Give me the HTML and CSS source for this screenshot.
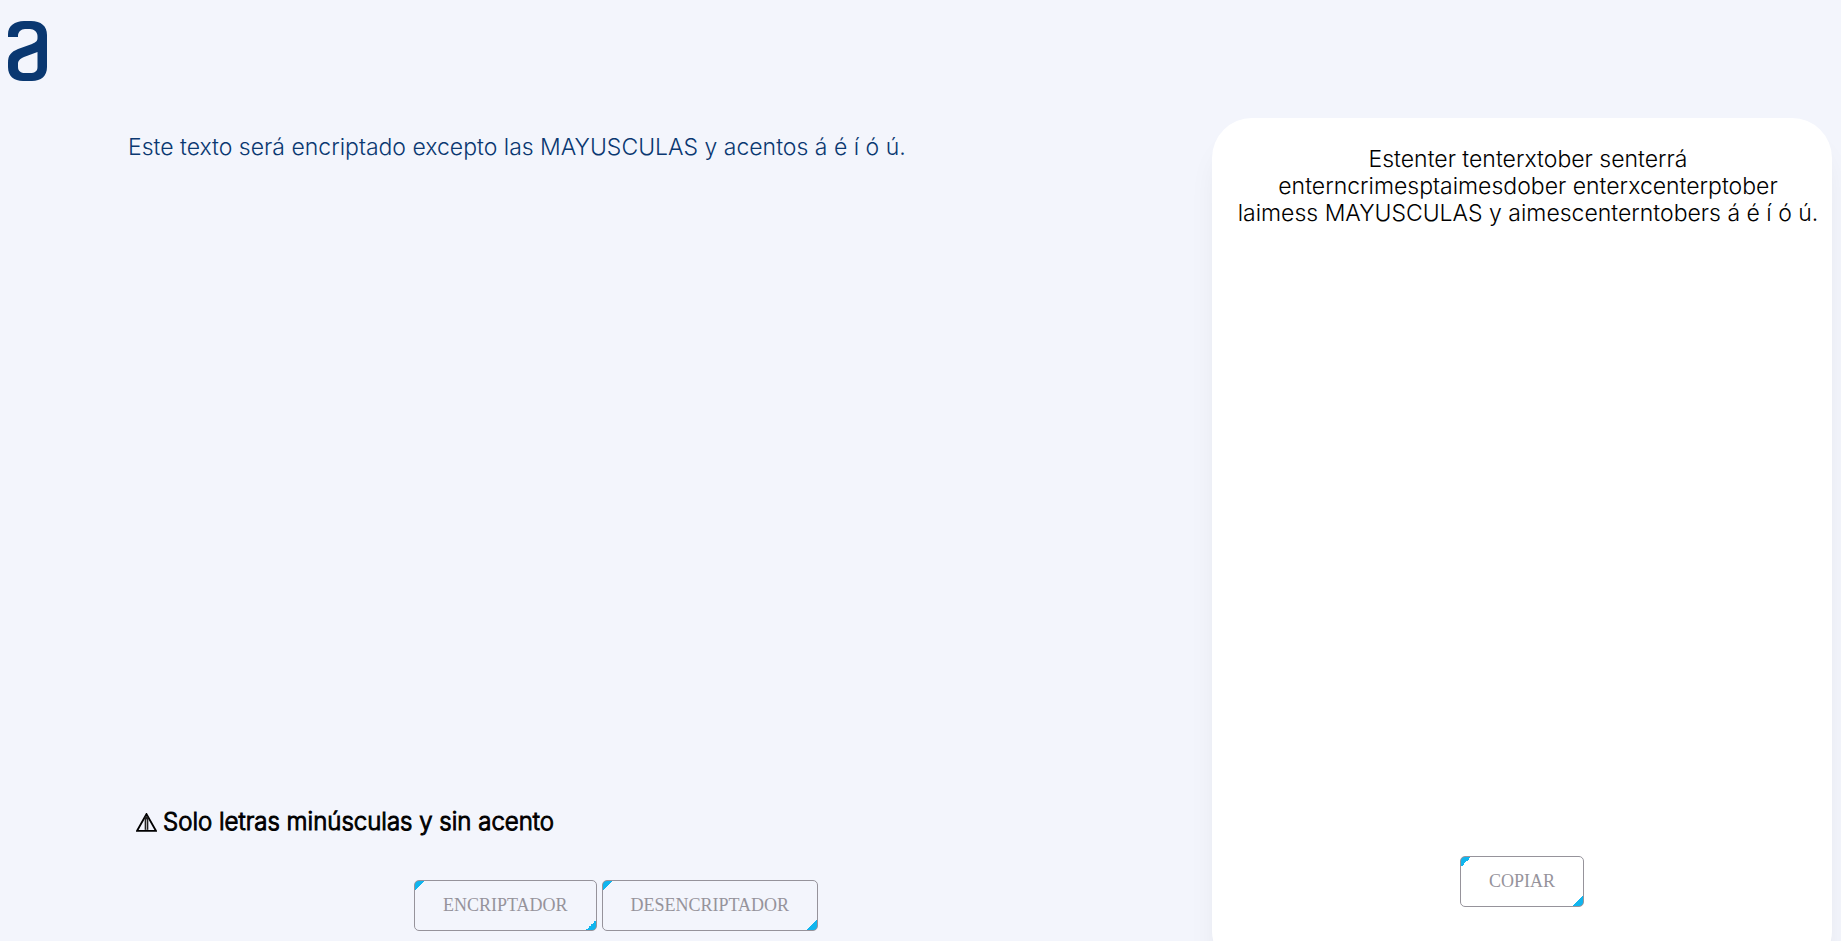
FILE: index.html
```html
<!DOCTYPE html>
<html lang="es">
<head>
<meta charset="utf-8">
<meta name="viewport" content="width=device-width, initial-scale=1">
<title>Encriptador de texto</title>
<link rel="stylesheet" href="styles.css">
</head>
<body>
<header class="header">
<svg class="logo" viewBox="0 0 39 60" role="img" aria-label="Alura">
<path fill="#0a3871" fill-rule="evenodd" d="M0 16V13C0 5 7 0 16 0H23C33 0 39 5 39 14V46C39 55 33 60 24 60H15C6 60 0 55 0 46V42C0 34 3 31 10 28L24 23C28 21 29.500 20 29.500 17V15C29.500 11 26 8 22 8H17C13 8 10 11 10 15V16ZM29.500 31L16 36C11.500 38 10 40 10 43V46C10 50 13 52 17 52H22C27 52 29.500 50 29.500 46Z"/>
</svg>
</header>
<main class="main">
<section class="editor">
<textarea class="text input" aria-label="Texto" spellcheck="false">Este texto será encriptado excepto las MAYUSCULAS y acentos á é í ó ú.</textarea>
<p class="notice"><svg class="warning" viewBox="0 0 20 18" aria-hidden="true"><path d="M10 1L19 17H1Z" fill="none" stroke="#000" stroke-width="1.800"/><path d="M10 3V16" stroke="#222" stroke-width="3.500"/><path d="M10 6V16" stroke="#aaa" stroke-width="1"/></svg>Solo letras minúsculas y sin acento</p>
<div class="actions">
<button class="btn" type="button">ENCRIPTADOR</button>
<button class="btn" type="button">DESENCRIPTADOR</button>
</div>
</section>
<section class="card">
<textarea class="text output" aria-label="Resultado" readonly spellcheck="false">Estenter tenterxtober senterrá enterncrimesptaimesdober enterxcenterptober laimess MAYUSCULAS y aimescenterntobers á é í ó ú.</textarea>
<button class="btn" type="button">COPIAR</button>
</section>
</main>
</body>
</html>
```
FILE: styles.css
```css
* {
  box-sizing: border-box;
}

body {
  display: flex;
  flex-direction: column;
  height: 100vh;
  margin: 0;
  padding: 0 9px 0 8px;
  overflow: hidden;
  background: #f3f5fc;
  font-family: Inter, sans-serif;
}

.header {
  flex: none;
  height: 118px;
  padding-top: 21px;
}

.logo {
  display: block;
  width: 39px;
  height: 60px;
}

.main {
  display: flex;
  flex: 1;
  gap: 184px;
  min-height: 0;
  padding-left: 118px;
}

.editor {
  display: flex;
  flex: 1;
  flex-direction: column;
  padding: 14px 0 10px;
}

.text {
  display: block;
  flex: 1;
  width: 100%;
  border: 0;
  outline: 0;
  background: transparent;
  font-family: Inter, sans-serif;
  font-size: 23px;
  font-weight: 300;
  line-height: 27px;
  resize: none;
  overflow: hidden;
}

.input {
  padding: 2px;
  color: #0a3871;
}

.notice {
  display: flex;
  align-items: center;
  gap: 6px;
  margin: 0 0 43px;
  padding-left: 10px;
  color: #000;
  font-size: 24px;
  font-weight: 300;
  line-height: 30px;
  -webkit-text-stroke: 1px #000;
}

.warning {
  width: 21px;
  height: 19px;
}

.actions {
  display: flex;
  justify-content: center;
  gap: 5px;
  padding-left: 78px;
}

.btn {
  height: 51px;
  padding: 0 28px;
  border: 1px solid #96939b;
  border-radius: 5px;
  background:
    linear-gradient(135deg, #11b5ee 50%, transparent 50%) left top / 10px 10px no-repeat,
    linear-gradient(315deg, #11b5ee 50%, transparent 50%) right bottom / 10px 10px no-repeat;
  color: #96939b;
  font-family: "Liberation Serif", serif;
  font-size: 18px;
  cursor: pointer;
}

.card {
  display: flex;
  flex: none;
  flex-direction: column;
  align-items: center;
  width: 620px;
  height: calc(100% + 30px);
  padding: 26px 11px 64px;
  border-radius: 40px;
  background: #fff;
  box-shadow: 0 24px 32px -8px rgba(0, 0, 0, 0.08);
}

.output {
  padding: 2px 2px 2px 14px;
  color: #000;
  text-align: center;
}
```
